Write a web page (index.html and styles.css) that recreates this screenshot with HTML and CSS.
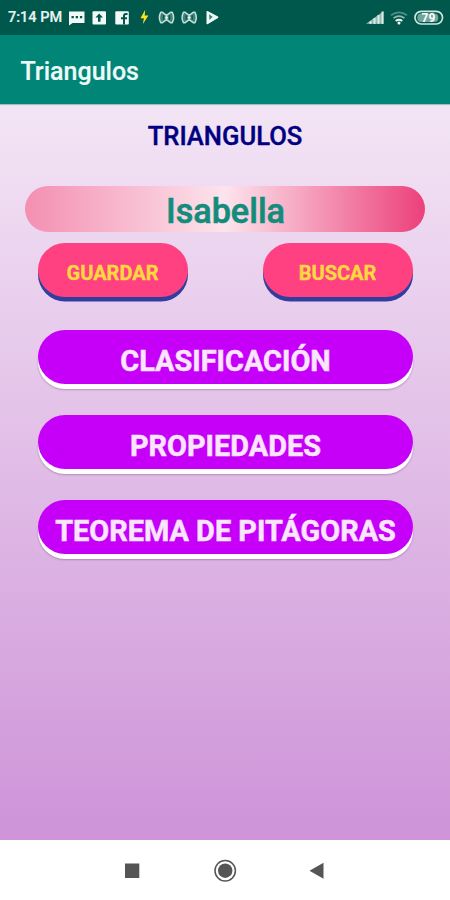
FILE: index.html
```html
<!DOCTYPE html>
<html lang="es">
<head>
<meta charset="utf-8">
<title>Triangulos</title>
<link rel="stylesheet" href="styles.css">
</head>
<body>
<div class="phone">
  <div class="status">
    <span class="clock">7:14 PM</span>
    <svg class="notices" width="152" height="18" viewBox="68 9 152 18">
      <path fill="#f2faf8" d="M69 11.500h15.500v11.500H72.500l-3.500 2.500z"/>
      <path fill="#00574b" d="M71.500 16h2.300v2.300h-2.300zM75.700 16h2.300v2.300h-2.300zM79.900 16h2.300v2.300h-2.300z"/>
      <rect x="92.500" y="11.300" width="13.500" height="13.200" rx="1" fill="#f2faf8"/>
      <path fill="#00574b" d="M99.200 13.500l3.800 4h-2.500v4.200h-2.500v-4.200h-2.600z"/>
      <rect x="115.300" y="11.300" width="13.500" height="13.200" rx="1" fill="#f2faf8"/>
      <path fill="none" stroke="#00574b" stroke-width="2" d="M127.500 14h-1.500q-2 0-2 2v8.500M121 18.200h6"/>
      <path fill="#ffe11f" d="M145.200 9.800l-4.700 8.500h3.400l-1 5.700 5.500-8.500h-3.700z"/>
      <g id="cast">
        <path fill="#3f8278" stroke="#c4dfda" stroke-width="1.500" stroke-linejoin="round" d="M160.700 12.300h1.800l4 3 4-3h1.800q2.600 5.200 0 10.400h-1.800l-4-3-4 3h-1.800q-2.600-5.200 0-10.400z"/>
        <path fill="none" stroke="#00574b" stroke-width="1.200" d="M163.500 15.300v4.400M169.500 15.300v4.400"/>
        <circle cx="166.500" cy="17.500" r="1.500" fill="#e6f4f1"/>
      </g>
      <use href="#cast" x="22.700"/>
      <path fill="#eef8f6" d="M206.500 11.200q.5-.6 1.500 0l10 5.300q1 .8 0 1.600l-10 6q-1.500.6-1.500-.8z"/>
      <path fill="#3f8278" d="M209 14.300l3.700 2.400-3.200 3.300z"/>
    </svg>
    <svg class="signals" width="80" height="18" viewBox="364 9 80 18">
      <path fill="#91bab3" d="M366 23.700l17.500-12.500v12.500z"/>
      <path stroke="#d9ebe8" stroke-width="2" d="M370.500 24v-2.800M374.500 24v-6M378.500 24v-9M382.500 24v-12.500"/>
      <g fill="none" stroke="#4f9085" stroke-width="1.700">
        <path d="M391 15.300q8-6 16 0"/>
        <path stroke="#8fbab3" d="M393.500 18.200q5.500-4.300 11 0"/>
        <path stroke="#eef8f6" stroke-width="2" d="M395.700 21q3.300-2.400 6.600 0"/>
      </g>
      <circle cx="399" cy="23" r="1.500" fill="#fff"/>
      <rect x="415" y="11.300" width="27.500" height="12.700" rx="6.200" fill="none" stroke="#cfe5e1" stroke-width="1.700"/>
      <rect x="417.300" y="13.400" width="21" height="8.500" rx="4" fill="#6fa59c"/>
      <text class="charge" x="428.500" y="22" text-anchor="middle">79</text>
    </svg>
  </div>
  <header class="toolbar"><span class="app-name">Triangulos</span></header>
  <main class="screen">
    <h1 class="heading">TRIANGULOS</h1>
    <div class="field">Isabella</div>
    <div class="actions">
      <button class="pill small">GUARDAR</button>
      <button class="pill small">BUSCAR</button>
    </div>
    <div class="menu">
      <button class="pill large">CLASIFICACIÓN</button>
      <button class="pill large">PROPIEDADES</button>
      <button class="pill large">TEOREMA DE PITÁGORAS</button>
    </div>
  </main>
  <nav class="navbar">
    <svg width="450" height="60" viewBox="0 840 450 60">
      <rect x="125" y="863.500" width="14.300" height="14.500" fill="#555"/>
      <circle cx="225.200" cy="870.700" r="10.200" fill="none" stroke="#555" stroke-width="1.500"/>
      <circle cx="225.200" cy="870.700" r="7.200" fill="#555"/>
      <path d="M309.500 870.700l14-8v16z" fill="#555"/>
    </svg>
  </nav>
</div>
</body>
</html>
```
FILE: styles.css
```css
* { box-sizing: border-box; }
body {
  margin: 0;
  font-family: Roboto, "Liberation Sans", sans-serif;
}
.phone {
  width: 450px;
  height: 900px;
  display: flex;
  flex-direction: column;
  overflow: hidden;
}
.status {
  height: 35px;
  display: flex;
  align-items: center;
  justify-content: space-between;
  padding: 0 6px 0 8px;
  background: #00574b;
}
.clock {
  width: 60px;
  font-size: 14.500px;
  font-weight: 500;
  line-height: 18px;
  white-space: nowrap;
  color: #e6f4f1;
  -webkit-text-stroke: .2px #e6f4f1;
}
.notices { margin-right: auto; }
.charge { font-size: 12px; font-weight: 700; fill: #fff; }
.toolbar {
  height: 69px;
  display: flex;
  align-items: center;
  padding: 4px 20.500px 0;
  background: #008577;
}
.app-name {
  font-size: 25px;
  font-weight: 500;
  color: #eefaf8;
  -webkit-text-stroke: .2px #eefaf8;
}
.screen {
  height: 736px;
  padding-top: 17px;
  background: linear-gradient(#f3e5f5, #ce93d8);
  box-shadow: inset 0 2px 1px -1px #a5b5bb;
}
.heading {
  margin: 0;
  height: 30px;
  line-height: 31px;
  font-size: 25.600px;
  font-weight: 500;
  text-align: center;
  color: #000080;
  -webkit-text-stroke: .4px #000080;
}
.field {
  width: 400px;
  height: 46px;
  margin: 35px auto 0;
  border-radius: 23px;
  background: linear-gradient(90deg, #f48fb1, #fce4ec 50%, #ec407a);
  text-align: center;
  font-size: 34.200px;
  font-weight: 500;
  line-height: 51px;
  text-indent: 1px;
  color: #148c7c;
  -webkit-text-stroke: .6px #148c7c;
}
.actions {
  display: flex;
  justify-content: space-between;
  width: 375px;
  margin: 10.500px auto 0;
}
.pill {
  display: block;
  padding: 0;
  border: 0;
  font-family: inherit;
  font-weight: 700;
  text-align: center;
  white-space: nowrap;
}
.small {
  width: 150px;
  height: 54.500px;
  border-radius: 27px;
  background: #ff4081;
  box-shadow: 0 4.500px 0 #303f9f;
  color: #ffd740;
  font-size: 20px;
  line-height: 60px;
  -webkit-text-stroke: .4px #ffd740;
}
.menu {
  display: flex;
  flex-direction: column;
  gap: 31px;
  width: 375px;
  margin: 33px auto 0;
}
.large {
  height: 54px;
  border-radius: 27px;
  background: #c600f8;
  box-shadow: 0 5px 0 #fff, 0 6px 2px rgba(90, 60, 100, .35);
  color: #f9e5fd;
  font-size: 28.900px;
  line-height: 62px;
  text-indent: 1px;
  -webkit-text-stroke: .5px #f9e5fd;
}
.navbar { height: 60px; background: #fff; }
.navbar svg { display: block; }
```
